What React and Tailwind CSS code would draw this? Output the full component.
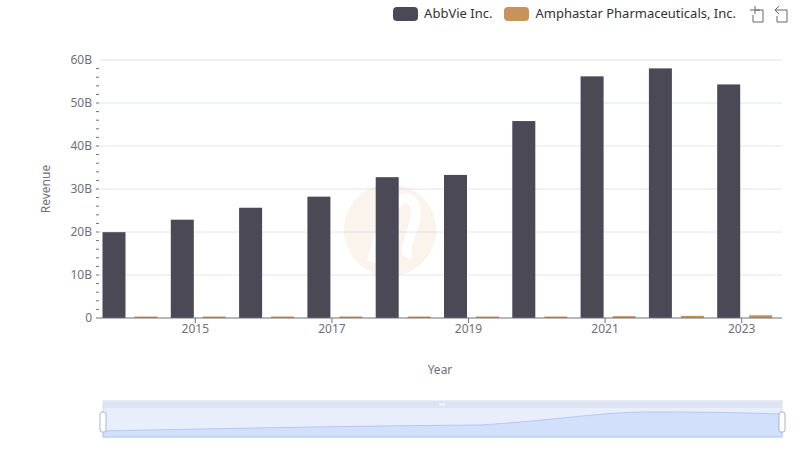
import React from "react";

const years = [2014, 2015, 2016, 2017, 2018, 2019, 2020, 2021, 2022, 2023];
const abbvie = [19.96, 22.86, 25.64, 28.22, 32.75, 33.27, 45.8, 56.2, 58.05, 54.32];
const amph = [0.21, 0.25, 0.26, 0.25, 0.3, 0.32, 0.35, 0.44, 0.5, 0.64];

const X0 = 99;
const X1 = 782;
const Y0 = 318;
const PX = 258 / 60;
const band = (X1 - X0) / 10;

const Legend = () => (
  <div className="flex items-center justify-end gap-3 pt-[4px] pr-[10px] text-[13px] text-[#333]">
    <div className="flex items-center gap-[6px]">
      <span className="inline-block w-[25px] h-[14px] rounded-[4px] bg-[#4a4955]" />
      <span>AbbVie Inc.</span>
    </div>
    <div className="flex items-center gap-[6px]">
      <span className="inline-block w-[25px] h-[14px] rounded-[4px] bg-[#c8925c]" />
      <span>Amphastar Pharmaceuticals, Inc.</span>
    </div>
    <svg width="42" height="18" viewBox="0 0 42 18" fill="none" stroke="#666" strokeWidth="1">
      <path d="M2 5h10M7 1v8M8 5h7v12H5V10" />
      <path d="M31 1l-4 4 4 4M27 5h12v12H29v-6" />
    </svg>
  </div>
);

export default function App() {
  const ticks = [0, 10, 20, 30, 40, 50, 60];
  return (
    <div className="w-[800px] h-[461px] bg-white relative font-['Liberation_Sans',sans-serif]">
      <Legend />
      <svg width="800" height="461" className="absolute left-0 top-0 pointer-events-none">
        {ticks.map((t) => (
          <g key={t}>
            {t > 0 && <line x1={X0} x2={X1} y1={Y0 - t * PX} y2={Y0 - t * PX} stroke="#e0e6f1" />}
            <text x="92" y={Y0 - t * PX + 4} textAnchor="end" fontSize="12" fill="#6e7079">
              {t === 0 ? "0" : `${t}B`}
            </text>
          </g>
        ))}
        {Array.from({ length: 30 }).map((_, i) => (
          <line key={i} x1="96" x2="99" y1={Y0 - (i * 2) * PX} y2={Y0 - (i * 2) * PX} stroke="#6e7079" />
        ))}
        <text x="50" y="189" fontSize="12" fill="#6e7079" textAnchor="middle" transform="rotate(-90 50 189)">
          Revenue
        </text>
        <g opacity="0.1">
          <circle cx="390" cy="230" r="46" fill="#d8a050" />
          <path d="M372 262c8-30 14-50 26-60s22 2 16 22-12 30-2 30" stroke="#fff" strokeWidth="10" fill="none" />
        </g>
        {years.map((y, i) => {
          const bx = X0 + i * band + 3.5;
          const h1 = abbvie[i] * PX;
          const h2 = Math.max(amph[i] * PX, 1.5);
          return (
            <g key={y}>
              <rect x={bx} y={Y0 - h1} width="23" height={h1} fill="#4a4955" />
              <rect x={bx + 32} y={Y0 - h2} width="23" height={h2} fill="#c8925c" />
            </g>
          );
        })}
        <line x1={X0} x2={X1} y1={Y0} y2={Y0} stroke="#6e7079" />
        {years.map((y, i) =>
          i % 2 === 1 ? (
            <g key={y}>
              <line x1={X0 + i * band + 28} x2={X0 + i * band + 28} y1={Y0} y2={Y0 + 5} stroke="#6e7079" />
              <text x={X0 + i * band + 28} y="333" fontSize="12" fill="#6e7079" textAnchor="middle">{y}</text>
            </g>
          ) : null
        )}
        <text x="440" y="374" fontSize="12" fill="#6e7079" textAnchor="middle">Year</text>
        <rect x="103" y="401" width="679" height="36" fill="#e8eefc" stroke="#d2dbee" />
        <rect x="103" y="401" width="679" height="7" fill="#dde3f2" />
        <path d="M103 431 C250 428 350 426 480 425 C560 420 600 412 650 412 C720 412 750 413 782 414 L782 437 L103 437 Z" fill="#d3e0fb" stroke="#a8c0f5" strokeWidth="0.8" />
        <rect x="100" y="412" width="6" height="20" rx="2" fill="#fff" stroke="#aab4c8" />
        <rect x="779" y="412" width="6" height="20" rx="2" fill="#fff" stroke="#aab4c8" />
        <path d="M440 403v3M442 403v3M444 403v3" stroke="#fff" />
      </svg>
    </div>
  );
}
